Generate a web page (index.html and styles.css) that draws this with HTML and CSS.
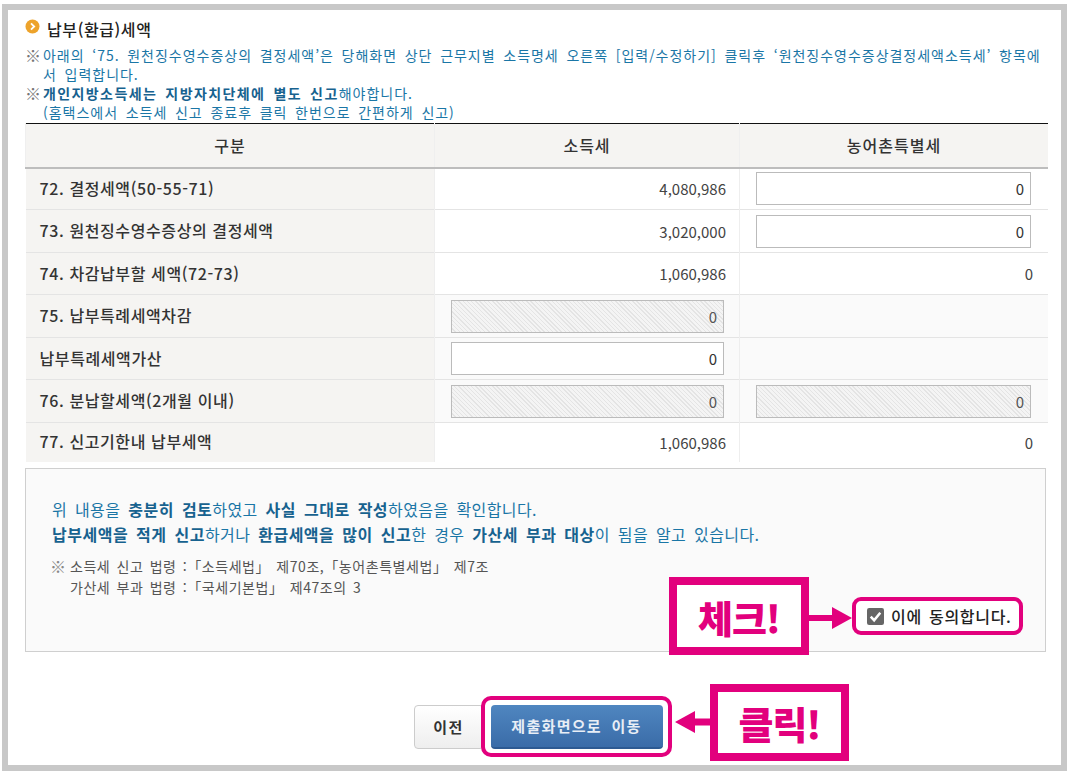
FILE: index.html
```html
<!DOCTYPE html>
<html lang="ko">
<head>
<meta charset="utf-8">
<title>납부(환급)세액</title>
<link rel="stylesheet" href="styles.css">
</head>
<body>
<main class="frame">
  <h1 class="title">
    <svg class="bullet" width="15" height="15" viewBox="0 0 15 15"><circle cx="7.500" cy="7.500" r="7" fill="#eda32b"/><path d="M6 4.300 9.200 7.500 6 10.700" fill="none" stroke="#fff" stroke-width="1.800"/></svg>
    납부(환급)세액
  </h1>
  <div class="notes">
    <p class="note"><span class="mark">※</span><span>아래의 ‘75. 원천징수영수증상의 결정세액’은 당해화면 상단 근무지별 소득명세 오른쪽 [입력/수정하기] 클릭후 ‘원천징수영수증상결정세액소득세’ 항목에서 입력합니다.</span></p>
    <p class="note"><span class="mark">※</span><span><b>개인지방소득세는 지방자치단체에 별도 신고</b>해야합니다.<br>(홈택스에서 소득세 신고 종료후 클릭 한번으로 간편하게 신고)</span></p>
  </div>
  <table class="tax">
    <thead>
      <tr class="r44"><th class="c1">구분</th><th class="c2">소득세</th><th class="c3">농어촌특별세</th></tr>
    </thead>
    <tbody>
      <tr class="r42"><th>72. 결정세액(50-55-71)</th><td class="num">4,080,986</td><td><input class="field" value="0"></td></tr>
      <tr class="r43"><th>73. 원천징수영수증상의 결정세액</th><td class="num">3,020,000</td><td><input class="field" value="0"></td></tr>
      <tr class="r42"><th>74. 차감납부할 세액(72-73)</th><td class="num">1,060,986</td><td class="plain">0</td></tr>
      <tr class="r43"><th>75. 납부특례세액차감</th><td class="shade"><input class="field off" value="0" readonly></td><td class="shade"></td></tr>
      <tr class="r42"><th>납부특례세액가산</th><td class="shade"><input class="field" value="0"></td><td class="shade"></td></tr>
      <tr class="r43"><th>76. 분납할세액(2개월 이내)</th><td class="shade"><input class="field off" value="0" readonly></td><td class="shade"><input class="field off" value="0" readonly></td></tr>
      <tr class="r39 last"><th>77. 신고기한내 납부세액</th><td class="num">1,060,986</td><td class="plain">0</td></tr>
    </tbody>
  </table>
  <section class="confirm">
    <p class="lead">위 내용을 <b>충분히 검토</b>하였고 <b>사실 그대로 작성</b>하였음을 확인합니다.<br><b>납부세액을 적게 신고</b>하거나 <b>환급세액을 많이 신고</b>한 경우 <b>가산세 부과 대상</b>이 됨을 알고 있습니다.</p>
    <p class="law"><span class="mark">※</span><span>소득세 신고 법령 :「소득세법」 제70조,「농어촌특별세법」 제7조<br>가산세 부과 법령 :「국세기본법」 제47조의 3</span></p>
  </section>
  <div class="actions">
    <button class="btn prev" type="button">이전</button>
    <button class="btn next" type="button">제출화면으로 이동</button>
  </div>

  <div class="callout check-callout">체크!</div>
  <svg class="arrow arrow-check" width="44" height="22" viewBox="0 0 44 22"><path d="M0 8H24V0L44 11 24 22V14H0Z" fill="#e2007d"/></svg>
  <label class="agree"><span class="box"><svg width="17" height="17" viewBox="0 0 16 16"><rect width="16" height="16" rx="2" fill="#666"/><path d="M3.500 8.200 6.700 11.500 12.500 4.500" fill="none" stroke="#fff" stroke-width="2.400"/></svg></span>이에 동의합니다.</label>
  <div class="ring"></div>
  <svg class="arrow arrow-click" width="36" height="22" viewBox="0 0 36 22"><path d="M36 7.500H20V0L0 11 20 22V14.500H36Z" fill="#e2007d"/></svg>
  <div class="callout click-callout">클릭!</div>
</main>
</body>
</html>
```
FILE: styles.css
```css
* { box-sizing: border-box; }
html, body { margin: 0; padding: 0; background: #fff; }
body {
  width: 1067px;
  height: 771px;
  overflow: hidden;
  font-family: "Noto Sans CJK KR", "Noto Sans", sans-serif;
}
.frame {
  position: relative;
  width: 1065px;
  height: 767px;
  margin: 4px 0 0 2px;
  border: 6px solid #c8c8c8;
  background: #fff;
  padding: 10px 12px 0 17px;
}
.title {
  display: flex;
  align-items: center;
  gap: 7px;
  margin: 0;
  height: 18px;
  font-size: 16px;
  font-weight: 500;
  color: #222;
  letter-spacing: 0.6px;
}
.bullet { margin-top: -5px; }
.notes { margin-top: 8px; height: 77px; }
.note {
  display: flex;
  margin: 0;
  font-size: 14px;
  line-height: 19px;
  letter-spacing: 0.98px;
  word-spacing: 2.8px;
  color: #1a76a6;
}
.note b { font-weight: 700; color: #17628f; letter-spacing: 1.4px; }
.mark {
  flex: none;
  width: 18px;
  color: #777;
  font-size: 16px;
  font-weight: 300;
  letter-spacing: 0;
}
.tax {
  width: 1023px;
  table-layout: fixed;
  border-collapse: collapse;
  border-top: 1px solid #111;
  font-size: 15px;
  color: #444;
}
.c1 { width: 409px; }
.c2 { width: 305px; }
.tax thead th {
  background: #f5f4f2;
  border-bottom: 2px solid #bdbdbd;
  border-left: 1px solid #efefef;
  font-weight: 500;
  color: #333;
  text-align: center;
  font-size: 16px;
  letter-spacing: 1px;
}
.tax tbody th {
  background: #f5f4f2;
  font-weight: 500;
  color: #333;
  text-align: left;
  padding: 0 0 2px 14px;
  font-size: 16px;
  letter-spacing: 0.6px;
}
.tax tbody tr { border-bottom: 1px solid #e4e4e4; }
.tax tbody tr.last { border-bottom: 0; }
.tax td {
  border-left: 1px solid #eee;
  text-align: right;
  padding: 0 15px 0 16px;
  vertical-align: middle;
}
.tax td:nth-child(3) { padding-right: 17px; }
.tax td.num { padding-right: 13px; }
.tax td.plain { padding-right: 15px; }
.tax td.shade { background: #fafafa; }
.r44 { height: 44px; }
.r43 { height: 43px; }
.r42 { height: 42px; }
.r39 { height: 39px; }
.field {
  display: block;
  width: 100%;
  height: 33px;
  border: 1px solid #bbb;
  background: #fff;
  padding: 0 6px;
  text-align: right;
  font: inherit;
  font-size: 15px;
  color: #333;
}
.field.off {
  background: repeating-linear-gradient(45deg, #f4f4f4 0 2px, #e4e4e4 2px 3px);
  color: #555;
}
.confirm {
  width: 1021px;
  height: 184px;
  margin-top: 6px;
  padding: 28px 26px 0;
  border: 1px solid #cfcfcf;
  background: #fafafa;
}
.lead {
  margin: 0;
  font-size: 16px;
  line-height: 25px;
  letter-spacing: 0.4px;
  word-spacing: 3px;
  color: #1a76a6;
}
.lead b { color: #17628f; font-weight: 700; letter-spacing: 0.5px; }
.law {
  display: flex;
  margin: 9px 0 0;
  font-size: 14px;
  line-height: 21px;
  letter-spacing: 0.55px;
  word-spacing: 1.8px;
  color: #555;
}
.law .mark { color: #888; width: 20px; margin-left: -2px; }
.actions {
  display: flex;
  justify-content: center;
  gap: 7px;
  margin-top: 53px;
  padding-left: 2px;
}
.btn {
  height: 44px;
  border-radius: 4px;
  font: inherit;
  font-size: 15px;
  font-weight: 700;
  padding: 0;
}
.prev {
  width: 70px;
  background: linear-gradient(#fff, #eee);
  border: 1px solid #ccc;
  color: #333;
  letter-spacing: 1.5px;
}
.next {
  width: 172px;
  background: linear-gradient(#4f86c0, #3a6ca8);
  border: 0;
  border-bottom: 2px solid #2d5a92;
  color: #e8eef6;
  letter-spacing: 1.3px;
  word-spacing: 4px;
}
.callout {
  position: absolute;
  display: flex;
  align-items: center;
  justify-content: center;
  border: 8px solid #e2007d;
  background: #fff;
  color: #e2007d;
  font-weight: 900;
  font-size: 38px;
  letter-spacing: -1px;
}
.check-callout { left: 661px; top: 567px; width: 140px; height: 78px; }
.click-callout { left: 702px; top: 674px; width: 139px; height: 77px; }
.arrow { position: absolute; }
.arrow-check { left: 800px; top: 597px; }
.arrow-click { left: 667px; top: 701px; }
.agree {
  position: absolute;
  left: 844px;
  top: 587px;
  width: 171px;
  height: 38px;
  display: flex;
  align-items: center;
  gap: 7px;
  padding-left: 11px;
  background: #fff;
  border: 4px solid #e2007d;
  border-radius: 9px;
  font-size: 16px;
  font-weight: 500;
  letter-spacing: 0.7px;
  word-spacing: 2px;
  color: #222;
}
.box { display: flex; }
.ring {
  position: absolute;
  left: 473px;
  top: 686px;
  width: 191px;
  height: 61px;
  border: 4px solid #e2007d;
  border-radius: 10px;
}
```
